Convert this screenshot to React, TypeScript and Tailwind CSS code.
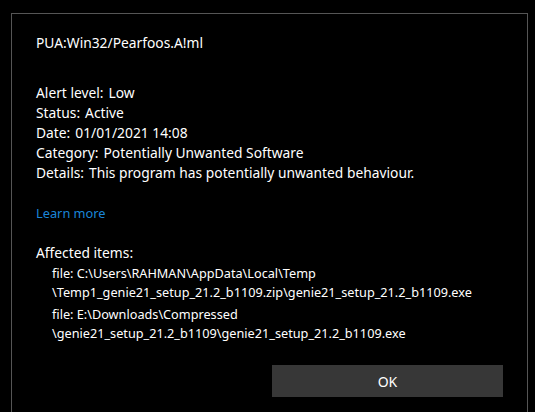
const font = { fontFamily: '"Noto Sans", "Open Sans", sans-serif' }

const details: [string, string][] = [
  ["Alert level:", "Low"],
  ["Status:", "Active"],
  ["Date:", "01/01/2021 14:08"],
  ["Category:", "Potentially Unwanted Software"],
  ["Details:", "This program has potentially unwanted behaviour."],
]

const items = [
  ["file: C:\\Users\\RAHMAN\\AppData\\Local\\Temp", "\\Temp1_genie21_setup_21.2_b1109.zip\\genie21_setup_21.2_b1109.exe"],
  ["file: E:\\Downloads\\Compressed", "\\genie21_setup_21.2_b1109\\genie21_setup_21.2_b1109.exe"],
]

export default function App() {
  return (
    <div className="h-[412px] w-[535px] overflow-hidden bg-black text-white" style={font}>
      <div className="ml-[11px] mt-[13px] h-[420px] w-[517px] border border-b-0 border-[#555555] pl-[24px] pr-[24px] pt-[19px]">
        <p className="text-[13.8px] leading-[20px]">PUA:Win32/Pearfoos.A!ml</p>

        <div className="mt-[30px] flex flex-col">
          {details.map(([label, value]) => (
            <p key={label} className="flex gap-[5px] text-[13.8px] leading-[20px]">
              <span>{label}</span>
              <span>{value}</span>
            </p>
          ))}
        </div>

        <a className="mt-[20px] block text-[12.8px] leading-[20px] text-[#1a86d9]">Learn more</a>

        <p className="mt-[20px] text-[13.8px] leading-[20px]">Affected items:</p>
        <div className="flex flex-col gap-[3px] pl-[16px] pt-[1px]">
          {items.map(([a, b]) => (
            <div key={a} className="text-[12.7px] leading-[19px]">
              <p>{a}</p>
              <p>{b}</p>
            </div>
          ))}
        </div>

        <div className="mt-[22px] flex justify-end">
          <button className="h-[32px] w-[231px] bg-[#373737] text-[14px] text-white">OK</button>
        </div>
      </div>
    </div>
  )
}
